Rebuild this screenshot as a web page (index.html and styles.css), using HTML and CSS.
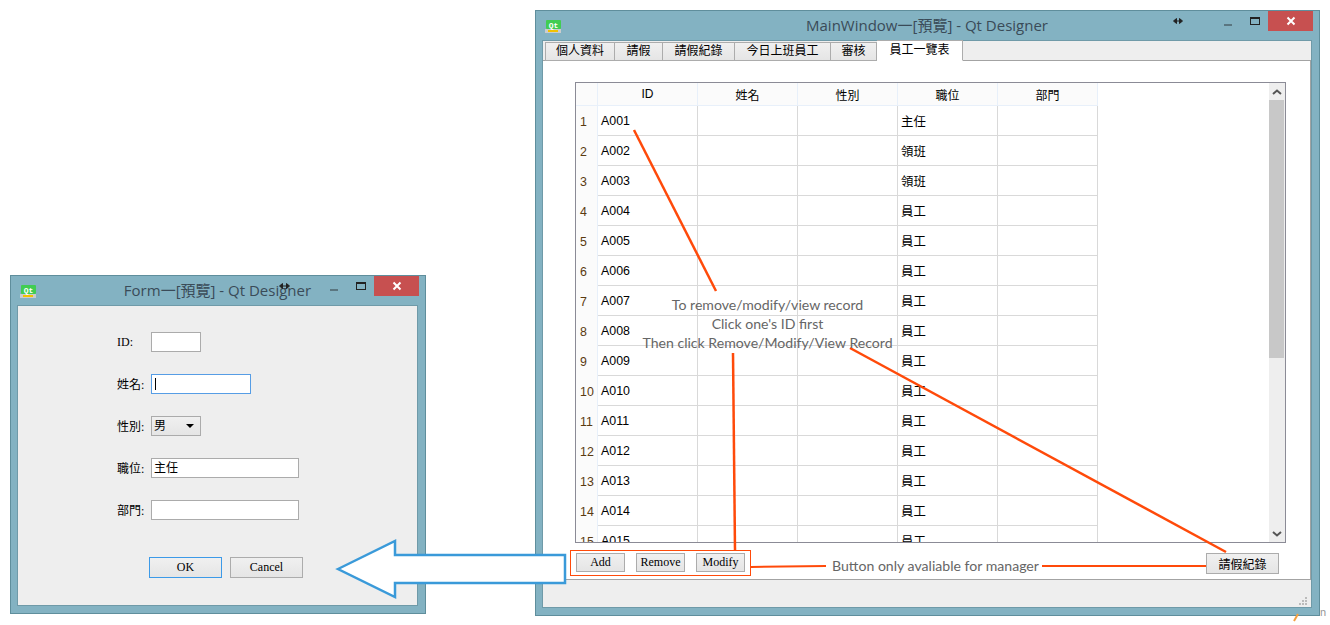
FILE: index.html
```html
<!DOCTYPE html>
<html lang="en">
<head>
    <meta charset="UTF-8">
    <meta name="viewport" content="width=device-width, initial-scale=1.0">
    <title>Qt Designer preview</title>
    <link rel="stylesheet" href="styles.css">
</head>
<body>
    <div class="desktop">

        <!-- employee form dialog -->
        <div class="window form-window">
            <div class="titlebar">
                <svg class="qt-icon" viewBox="0 0 16 13"><rect x="1" y="0" width="15" height="9" rx="1" fill="#41cd52"/><rect x="0" y="9" width="16" height="4" fill="#ccc"/><rect x="3" y="10" width="10" height="2" fill="#f2c200"/><text x="8.500" y="7.500" class="qt-text">Qt</text></svg>
                <span class="title-text">Form一[預覽] - Qt Designer</span>
                <div class="win-buttons">
                    <span class="win-min"></span>
                    <span class="win-max"></span>
                    <span class="win-close"><svg viewBox="0 0 10 10" width="10" height="10"><path d="M1.5 1.5 L8.5 8.5 M8.5 1.5 L1.5 8.5" stroke="#fff" stroke-width="2"/></svg></span>
                </div>
            </div>
            <div class="form-body">
                <div class="form-rows">
                    <div class="form-row"><label>ID:</label><div class="field field-s"></div></div>
                    <div class="form-row"><label>姓名:</label><div class="field field-m focused"><span class="caret"></span></div></div>
                    <div class="form-row"><label>性別:</label><div class="field field-s combo">男<span class="combo-arrow"></span></div></div>
                    <div class="form-row"><label>職位:</label><div class="field field-l">主任</div></div>
                    <div class="form-row"><label>部門:</label><div class="field field-l"></div></div>
                </div>
                <div class="form-actions">
                    <button class="qbtn qbtn-dialog default">OK</button>
                    <button class="qbtn qbtn-dialog">Cancel</button>
                </div>
            </div>
        </div>

        <!-- main window -->
        <div class="window main-window">
            <div class="titlebar">
                <svg class="qt-icon" viewBox="0 0 16 13"><rect x="1" y="0" width="15" height="9" rx="1" fill="#41cd52"/><rect x="0" y="9" width="16" height="4" fill="#ccc"/><rect x="3" y="10" width="10" height="2" fill="#f2c200"/><text x="8.500" y="7.500" class="qt-text">Qt</text></svg>
                <span class="title-text">MainWindow一[預覽] - Qt Designer</span>
                <div class="win-buttons">
                    <span class="win-min"></span>
                    <span class="win-max"></span>
                    <span class="win-close"><svg viewBox="0 0 10 10" width="10" height="10"><path d="M1.5 1.5 L8.5 8.5 M8.5 1.5 L1.5 8.5" stroke="#fff" stroke-width="2"/></svg></span>
                </div>
            </div>
            <div class="main-body">
                <div class="tabs">
                    <div class="tab t1">個人資料</div>
                    <div class="tab t2">請假</div>
                    <div class="tab t3">請假紀錄</div>
                    <div class="tab t4">今日上班員工</div>
                    <div class="tab t5">審核</div>
                    <div class="tab t6 active">員工一覽表</div>
                </div>
                <div class="panel">
                    <div class="table-box">
                        <div class="table-clip">
                            <table class="grid">
                                <thead>
                                    <tr><th class="rownum"></th><th>ID</th><th>姓名</th><th>性別</th><th>職位</th><th>部門</th></tr>
                                </thead>
                                <tbody id="rows"></tbody>
                            </table>
                        </div>
                        <div class="scrollbar">
                            <div class="scroll-btn"><svg viewBox="0 0 10 6" width="10" height="6"><path d="M1 5 L5 1.5 L9 5" fill="none" stroke="#555" stroke-width="2"/></svg></div>
                            <div class="scroll-track"><div class="scroll-thumb"></div></div>
                            <div class="scroll-btn"><svg viewBox="0 0 10 6" width="10" height="6"><path d="M1 1 L5 4.5 L9 1" fill="none" stroke="#555" stroke-width="2"/></svg></div>
                        </div>
                    </div>
                    <div class="panel-actions">
                        <div class="left-actions">
                            <button class="qbtn qbtn-small">Add</button>
                            <button class="qbtn qbtn-small">Remove</button>
                            <button class="qbtn qbtn-small">Modify</button>
                        </div>
                        <button class="qbtn qbtn-dialog">請假紀錄</button>
                    </div>
                </div>
                <div class="statusbar">
                    <svg class="grip" viewBox="0 0 9 9" width="9" height="9"><path d="M6 0h2v2H6zM3 3h2v2H3zM6 3h2v2H6zM0 6h2v2H0zM3 6h2v2H3zM6 6h2v2H6z" fill="#bbb"/></svg>
                </div>
            </div>
        </div>

        <!-- annotations drawn over the screenshot -->
        <svg class="overlay" viewBox="0 0 1330 625" width="1330" height="625">
            <g fill="none" stroke="#ff4a0a" stroke-width="2.500">
                <path d="M634 130 L716 291"/>
                <path d="M733 353 L735 550"/>
                <path d="M850 348 L1226 552"/>
                <path d="M751 567 L826 566" stroke-width="2"/>
                <path d="M1042 566 L1206 566" stroke-width="2"/>
                <rect x="570.5" y="550.5" width="180" height="25" stroke-width="1"/>
            </g>
            <path d="M338 569 L395 541 V555 H565 V583 H395 V597 Z" fill="#fff" stroke="#3a9ad9" stroke-width="2.500"/>
            <!-- resize cursors caught in the capture -->
            <g fill="#222" stroke="#222" stroke-width="1">
                <path d="M1176.500 18.500 L1173.500 21 L1176.500 23.500 Z M1179.500 18.500 L1182.500 21 L1179.500 23.500 Z M1176 21 H1180"/>
                <path d="M282.500 283.500 L279.500 286 L282.500 288.500 Z M286.500 283.500 L289.500 286 L286.500 288.500 Z M282 286 H287"/>
            </g>
            <path d="M1298 614 L1294 621" stroke="#f4a040" stroke-width="2"/>
        </svg>
        <div class="note note-how">
            <div>To remove/modify/view record</div>
            <div>Click one's ID first</div>
            <div>Then click Remove/Modify/View Record</div>
        </div>
        <div class="note note-manager">Button only avaliable for manager</div>
        <div class="note-stray">n</div>
    </div>

    <script>
        var jobs = ["主任", "領班", "領班"];
        var tbody = document.getElementById("rows");
        for (var i = 1; i <= 15; i++) {
            var num = ("00" + i).slice(-3);
            var job = jobs[i - 1] || "員工";
            var tr = document.createElement("tr");
            tr.innerHTML = '<td class="rownum">' + i + '</td><td>A' + num + '</td><td></td><td></td><td>' + job + '</td><td></td>';
            tbody.appendChild(tr);
        }
    </script>
</body>
</html>
```

FILE: styles.css
```css
* {
    box-sizing: border-box;
}
html, body {
    margin: 0;
    padding: 0;
    background: #fff;
}
.desktop {
    position: relative;
    width: 1330px;
    height: 625px;
    overflow: hidden;
    font-family: "Liberation Sans", "Noto Sans CJK TC", sans-serif;
}

/* windows */
.window {
    position: absolute;
    display: flex;
    flex-direction: column;
    background: #83b2c2;
    border: 1px solid #5f8e9c;
}
.main-window {
    left: 535px;
    top: 10px;
    width: 785px;
    height: 606px;
    padding: 0 7px 7px 6px;
}
.form-window {
    left: 10px;
    top: 275px;
    width: 416px;
    height: 339px;
    padding: 0 7px 7px 6px;
}
.titlebar {
    position: relative;
    height: 29px;
    flex: none;
    display: flex;
    justify-content: center;
    align-items: center;
}
.title-text {
    font-family: "Open Sans", "Noto Sans CJK TC", sans-serif;
    font-size: 15px;
    color: #3a4b58;
    margin-bottom: 3px;
}
.qt-icon {
    position: absolute;
    left: 3px;
    top: 9px;
    width: 16px;
    height: 13px;
}
.qt-text {
    font-family: "Liberation Mono", monospace;
    font-size: 8px;
    font-weight: bold;
    fill: #fff;
    text-anchor: middle;
}
.win-buttons {
    position: absolute;
    right: -1px;
    top: 0;
    display: flex;
    align-items: flex-start;
}
.win-min {
    width: 8px;
    height: 2px;
    background: #5a7680;
    margin: 13px 18px 0 0;
}
.win-max {
    width: 10px;
    height: 8px;
    border: 1px solid #222;
    border-top-width: 2px;
    margin: 6px 8px 0 0;
}
.win-close {
    width: 45px;
    height: 20px;
    background: #c75050;
    display: flex;
    align-items: center;
    justify-content: center;
}

/* form dialog */
.form-body {
    flex: 1;
    background: #eeeeee;
    border: 1px solid #6f9aa8;
    padding: 26px 0 0 99px;
    font-family: "Liberation Serif", "Noto Sans CJK TC", serif;
    font-size: 12px;
    color: #000;
}
.form-rows {
    display: flex;
    flex-direction: column;
    gap: 22px;
}
.form-row {
    display: flex;
    align-items: center;
    height: 20px;
}
.form-row label {
    width: 34px;
}
.field {
    height: 20px;
    background: #fff;
    border: 1px solid #ababab;
    padding-left: 2px;
    line-height: 18px;
    display: flex;
    align-items: center;
}
.field-s {
    width: 50px;
}
.field-m {
    width: 100px;
}
.field-l {
    width: 148px;
}
.focused {
    border-color: #569de5;
}
.caret {
    width: 1px;
    height: 12px;
    background: #000;
    margin-left: 1px;
}
.combo {
    position: relative;
    background: linear-gradient(#f0f0f0, #e5e5e5);
}
.combo-arrow {
    position: absolute;
    right: 6px;
    top: 7px;
    border-left: 4px solid transparent;
    border-right: 4px solid transparent;
    border-top: 4px solid #000;
}
.form-actions {
    display: flex;
    gap: 8px;
    margin: 37px 0 0 32px;
}

/* buttons */
.qbtn {
    font-family: "Liberation Serif", "Noto Sans CJK TC", serif;
    font-size: 12px;
    color: #000;
    background: linear-gradient(#f0f0f0, #e5e5e5);
    border: 1px solid #acacac;
    padding: 0;
}
.qbtn-dialog {
    width: 73px;
    height: 21px;
}
.qbtn-small {
    width: 49px;
    height: 19px;
}
.default {
    border-color: #3c9ae8;
}

/* main window body */
.main-body {
    flex: 1;
    display: flex;
    flex-direction: column;
    min-height: 0;
    background: #eeeeee;
    border: 1px solid #6f9aa8;
}
.tabs {
    flex: none;
    height: 20px;
    display: flex;
    align-items: flex-end;
    padding-left: 2px;
    position: relative;
    z-index: 1;
    margin-bottom: -1px;
}
.tab {
    height: 19px;
    background: linear-gradient(#f0f0f0, #e5e5e5);
    border: 1px solid #acacac;
    border-left-width: 0;
    font-size: 12px;
    line-height: 15px;
    color: #000;
    display: flex;
    align-items: center;
    justify-content: center;
}
.t1 {
    width: 70px;
    border-left-width: 1px;
}
.t2 {
    width: 48px;
}
.t3 {
    width: 72px;
}
.t4 {
    width: 96px;
}
.t5 {
    width: 46px;
}
.t6 {
    width: 86px;
}
.tab.active {
    height: 21px;
    background: #fff;
    border-bottom-color: #fff;
}
.panel {
    height: 520px;
    flex: none;
    background: #fff;
    border: 1px solid #a3a3a3;
    border-left: 0;
    padding: 21px 24px 0 32px;
    display: flex;
    flex-direction: column;
}
.table-box {
    height: 461px;
    flex: none;
    display: flex;
    border: 1px solid #8b8b96;
}
.table-clip {
    flex: 1;
    overflow: hidden;
}
.grid {
    border-collapse: separate;
    border-spacing: 0;
    table-layout: fixed;
    width: 522px;
    font-size: 12.4px;
    color: #000;
}
.grid th {
    width: 100px;
    height: 23px;
    padding: 0;
    font-size: 12px;
    font-weight: normal;
    background: #fbfbfb;
    border-right: 1px solid #e8f0fa;
    border-bottom: 1px solid #e8f0fa;
}
.grid th.rownum {
    width: 22px;
}
.grid td {
    height: 30px;
    padding: 0 0 0 3px;
    border-right: 1px solid #d9d9d9;
    border-bottom: 1px solid #d9d9d9;
    vertical-align: middle;
}
.grid td.rownum {
    padding: 2px 0 0 4px;
    background: #fbfbfb;
    border-right: 1px solid #e8f0fa;
    border-bottom: 0;
    color: #5a3a10;
}
.scrollbar {
    width: 16px;
    flex: none;
    display: flex;
    flex-direction: column;
    background: #eeeeee;
}
.scroll-btn {
    height: 17px;
    flex: none;
    display: flex;
    align-items: center;
    justify-content: center;
}
.scroll-track {
    flex: 1;
}
.scroll-thumb {
    height: 258px;
    background: #c8c8c8;
    margin-right: 1px;
}
.panel-actions {
    flex: 1;
    display: flex;
    justify-content: space-between;
    align-items: flex-start;
    padding: 10px 7px 0 1px;
}
.left-actions {
    display: flex;
    gap: 11px;
}
.statusbar {
    flex: 1;
    position: relative;
}
.grip {
    position: absolute;
    right: 3px;
    bottom: 1px;
}

/* annotations */
.overlay {
    position: absolute;
    left: 0;
    top: 0;
    pointer-events: none;
}
.note {
    position: absolute;
    font-family: "Lato", sans-serif;
    font-size: 14.1px;
    color: #666;
    white-space: nowrap;
}
.note-how {
    left: 617px;
    top: 295px;
    width: 301px;
    text-align: center;
    line-height: 19px;
}
.note-manager {
    left: 832px;
    top: 558px;
    line-height: 16px;
}
.note-stray {
    position: absolute;
    left: 1320px;
    top: 605px;
    font-family: "Lato", sans-serif;
    font-size: 11px;
    color: #999;
}
```
